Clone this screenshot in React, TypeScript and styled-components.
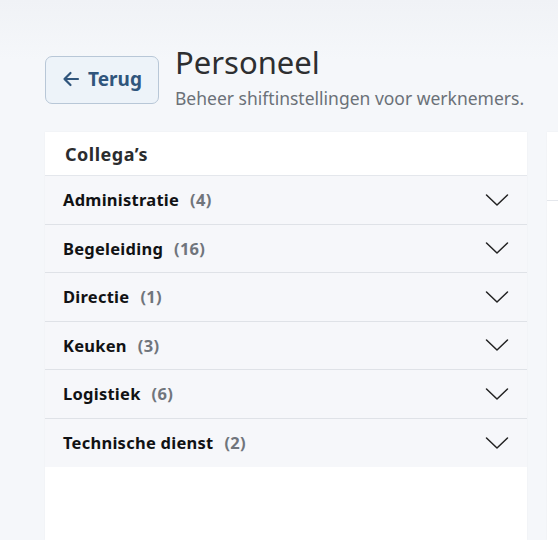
import React from 'react'
import styled, { createGlobalStyle } from 'styled-components'

const GlobalStyle = createGlobalStyle`
  html, body {
    margin: 0;
    padding: 0;
    height: 100%;
  }
  body {
    background: linear-gradient(180deg, #f0f2f6 0%, #f5f7fa 60px, #f5f7fa 100%);
    font-family: 'Noto Sans', 'Liberation Sans', sans-serif;
    overflow: hidden;
  }
`

const Page = styled.div`
  padding: 45px 0 0 45px;
  width: 558px;
  height: 540px;
  box-sizing: border-box;
  display: flex;
  flex-direction: column;
  overflow: hidden;
`

const Header = styled.div`
  display: flex;
  align-items: flex-start;
  gap: 16px;
  height: 87px;
`

const BackButton = styled.button`
  margin-top: 11px;
  width: 114px;
  height: 48px;
  display: flex;
  align-items: center;
  justify-content: center;
  gap: 8px;
  background: #edf3f9;
  border: 1px solid #b8c7d7;
  border-radius: 7px;
  color: #30557c;
  font-family: inherit;
  font-size: 19px;
  font-weight: 700;
  cursor: pointer;
  padding: 0 0 2px;
`

const TitleBlock = styled.div`
  display: flex;
  flex-direction: column;
`

const Title = styled.h1`
  margin: -1px 0 0;
  font-size: 31px;
  font-weight: 400;
  line-height: 36px;
  color: #2e2f31;
`

const Subtitle = styled.p`
  margin: 7px 0 0;
  font-size: 17.5px;
  line-height: 22px;
  color: #6b7178;
`

const Columns = styled.div`
  display: flex;
  gap: 20px;
  flex: 1;
  min-width: 0;
`

const Card = styled.div<{ width?: number }>`
  background: #ffffff;
  width: ${({ width }) => (width ? `${width}px` : 'auto')};
  flex: ${({ width }) => (width ? 'none' : '1')};
  min-width: 0;
  box-shadow: 0 0 2px rgba(40, 50, 80, 0.04);
  display: flex;
  flex-direction: column;
`

const CardHeader = styled.div<{ height?: number }>`
  height: ${({ height }) => height ?? 44}px;
  padding: 0 20px;
  display: flex;
  align-items: center;
  border-bottom: 1px solid #e4e7ec;
  font-size: 18px;
  font-weight: 700;
  letter-spacing: 0.5px;
  color: #2b2c2e;
  box-sizing: border-box;
`

const Row = styled.div`
  height: 48.5px;
  box-sizing: border-box;
  padding: 0 18px 0 18px;
  display: flex;
  align-items: center;
  background: #f6f7fa;
  border-bottom: 1px solid #dfe2e7;

  &:last-child {
    border-bottom: none;
  }
`

const RowLabel = styled.span`
  flex: 1;
  font-size: 16.5px;
  font-weight: 700;
  letter-spacing: 0.25px;
  color: #111214;
`

const Count = styled.span`
  margin-left: 11px;
  color: #70757c;
`

const Chevron = () => (
  <svg width="24" height="14" viewBox="0 0 24 14" fill="none">
    <path d="M1.5 2L12 12L22.5 2" stroke="#222" strokeWidth="1.5" strokeLinecap="round" strokeLinejoin="round" />
  </svg>
)

const ArrowLeft = () => (
  <svg width="18" height="16" viewBox="0 0 18 16" fill="none">
    <path d="M16 8H2.5M8.5 2L2.5 8L8.5 14" stroke="#30557c" strokeWidth="2.2" strokeLinecap="round" strokeLinejoin="round" />
  </svg>
)

const departments = [
  { name: 'Administratie', count: 4 },
  { name: 'Begeleiding', count: 16 },
  { name: 'Directie', count: 1 },
  { name: 'Keuken', count: 3 },
  { name: 'Logistiek', count: 6 },
  { name: 'Technische dienst', count: 2 },
]

export default function App() {
  return (
    <>
      <GlobalStyle />
      <Page>
        <Header>
          <BackButton>
            <ArrowLeft />
            Terug
          </BackButton>
          <TitleBlock>
            <Title>Personeel</Title>
            <Subtitle>Beheer shiftinstellingen voor werknemers.</Subtitle>
          </TitleBlock>
        </Header>
        <Columns>
          <Card width={482}>
            <CardHeader>Collega’s</CardHeader>
            {departments.map((d) => (
              <Row key={d.name}>
                <RowLabel>
                  {d.name}
                  <Count>({d.count})</Count>
                </RowLabel>
                <Chevron />
              </Row>
            ))}
          </Card>
          <Card>
            <CardHeader height={69} />
          </Card>
        </Columns>
      </Page>
    </>
  )
}
